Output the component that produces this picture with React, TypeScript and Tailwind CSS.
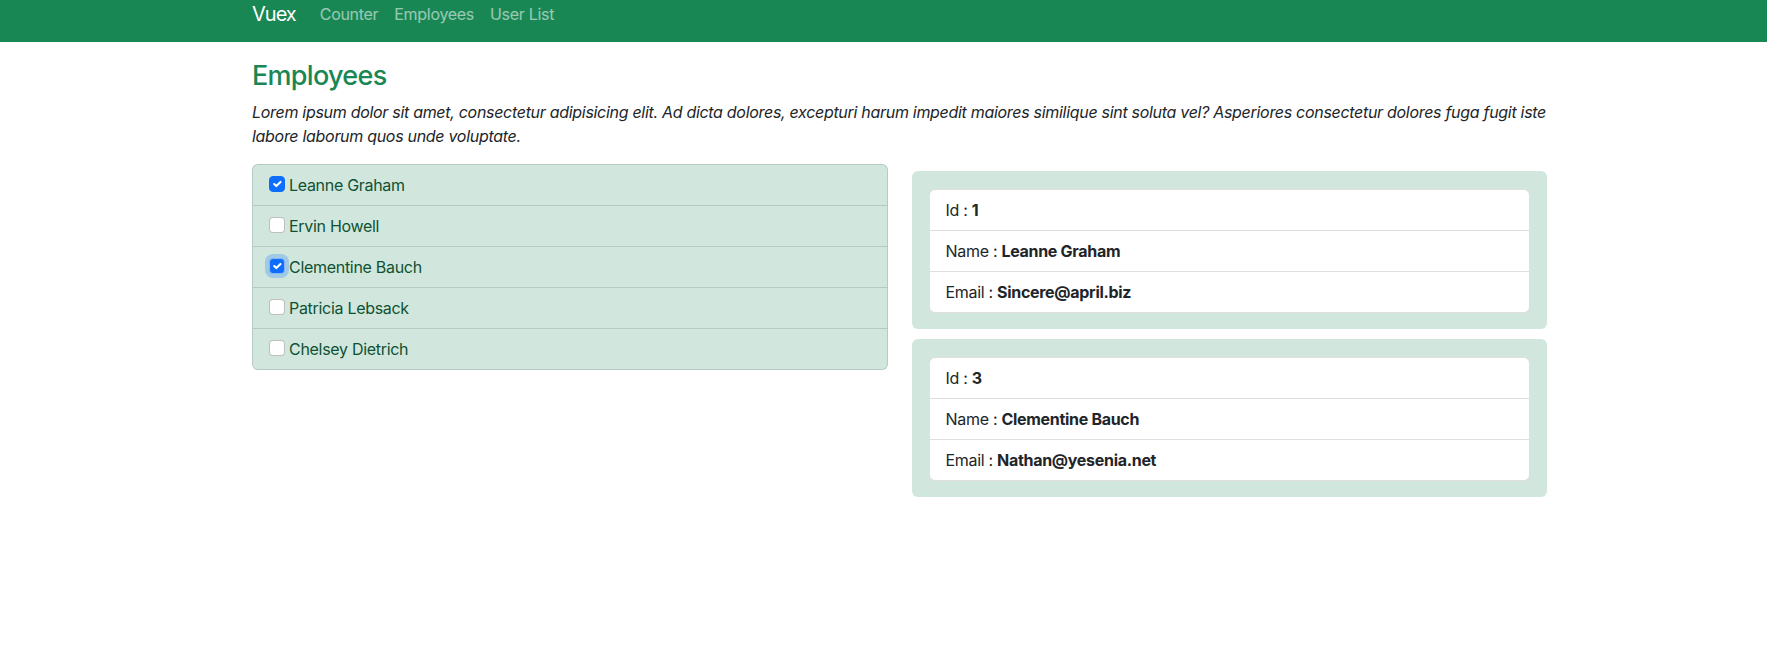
import { useState } from 'react';

type Employee = { id: number; name: string; email: string };

const employees: Employee[] = [
  { id: 1, name: 'Leanne Graham', email: 'Sincere@april.biz' },
  { id: 2, name: 'Ervin Howell', email: 'Shanna@melissa.tv' },
  { id: 3, name: 'Clementine Bauch', email: 'Nathan@yesenia.net' },
  { id: 4, name: 'Patricia Lebsack', email: 'Julianne.OConner@kory.org' },
  { id: 5, name: 'Chelsey Dietrich', email: 'Lucio_Hettinger@annie.ca' },
];

function Check({ checked, focused }: { checked: boolean; focused?: boolean }) {
  return (
    <span
      className={
        'mt-[3px] flex h-4 w-4 shrink-0 items-center justify-center rounded-[4px] border ' +
        (checked ? 'border-[#0d6efd] bg-[#0d6efd] ' : 'border-black/25 bg-white ') +
        (focused ? 'border-[#86b7fe] shadow-[0_0_0_4px_rgba(13,110,253,0.25)]' : '')
      }
    >
      {checked && (
        <svg viewBox="0 0 20 20" className="h-4 w-4" fill="none">
          <path d="m6 10 3 3 6-6" stroke="#fff" strokeWidth="3" strokeLinecap="round" strokeLinejoin="round" />
        </svg>
      )}
    </span>
  );
}

export default function App() {
  const [selected, setSelected] = useState<number[]>([1, 3]);

  function toggle(id: number) {
    setSelected((s) => (s.includes(id) ? s.filter((x) => x !== id) : [...s, id]));
  }

  const picked = employees.filter((e) => selected.includes(e.id));

  return (
    <div className="min-h-[654px] bg-white font-['Inter',sans-serif] text-[16px] tracking-[-0.3px] text-[#212529]">
      <nav className="h-[42px] bg-[#198754]">
        <div className="ml-[252px] flex h-[28px] items-center">
          <a className="mr-4 text-[20px] leading-[30px] tracking-[-1px] text-white">Vuex</a>
          <a className="px-2 text-white/55">Counter</a>
          <a className="px-2 text-white/55">Employees</a>
          <a className="px-2 text-white/55">User List</a>
        </div>
      </nav>

      <main className="ml-[252px] w-[1295px] pt-[18px]">
        <h3 className="mb-2 text-[27px] font-medium leading-[1.2] tracking-[-0.7px] text-[#198754]">Employees</h3>
        <p className="mb-4 italic leading-6">
          <span className="whitespace-nowrap">
            Lorem ipsum dolor sit amet, consectetur adipisicing elit. Ad dicta dolores, excepturi harum impedit maiores
            similique sint soluta vel? Asperiores consectetur dolores fuga fugit iste
          </span>
          <br />
          labore laborum quos unde voluptate.
        </p>

        <div className="grid grid-cols-2 gap-6">
          <ul className="self-start overflow-hidden rounded-[6px] border border-black/[0.125] bg-[#d1e7dd] text-[#0f5132]">
            {employees.map((e, i) => (
              <li
                key={e.id}
                onClick={() => toggle(e.id)}
                className={'flex cursor-pointer gap-1 px-4 py-2 leading-6 ' + (i > 0 ? 'border-t border-black/[0.125]' : '')}
              >
                <Check checked={selected.includes(e.id)} focused={e.id === 3} />
                <span>{e.name}</span>
              </li>
            ))}
          </ul>

          <div className="mt-[7px] flex flex-col gap-[10px]">
            {picked.map((e) => (
              <div key={e.id} className="rounded-[6px] bg-[#d1e7dd] px-[17px] pb-4 pt-[18px]">
                <ul className="rounded-[6px] border border-black/[0.125] bg-white">
                  <li className="px-4 py-2 leading-6">
                    Id : <b className="font-bold">{e.id}</b>
                  </li>
                  <li className="border-t border-black/[0.125] px-4 py-2 leading-6">
                    Name : <b className="font-bold">{e.name}</b>
                  </li>
                  <li className="border-t border-black/[0.125] px-4 py-2 leading-6">
                    Email : <b className="font-bold">{e.email}</b>
                  </li>
                </ul>
              </div>
            ))}
          </div>
        </div>
      </main>
    </div>
  );
}
